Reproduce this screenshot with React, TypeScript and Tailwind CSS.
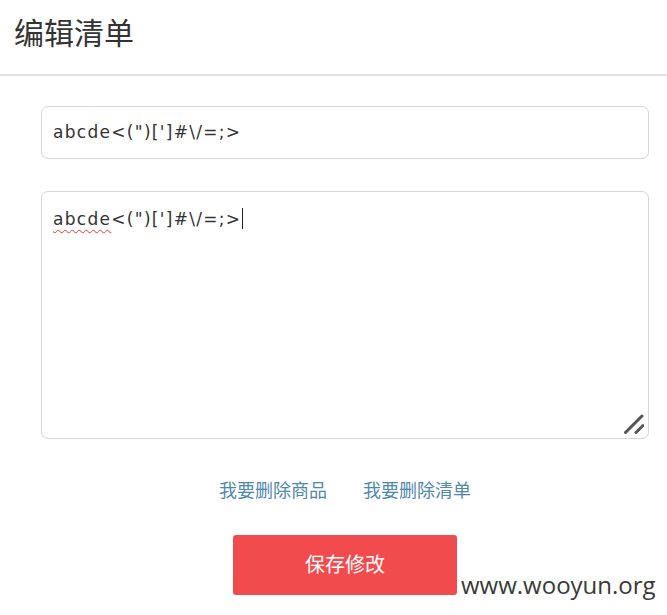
import React from "react";

const cjk = "font-['Noto_Sans','Noto_Sans_CJK_SC',sans-serif]";
const mono = "font-['DejaVu_Sans','Noto_Sans_CJK_SC',sans-serif] tracking-[1.3px]";

const value = "abcde<(\")[']#\\/=;>";

export default function App() {
  return (
    <div className={`relative h-[615px] w-[667px] overflow-hidden bg-white ${cjk}`}>
      <div className="flex h-[76px] items-center border-b-2 border-[#e1e1e1] pl-[14px] pb-[10px]">
        <h1 className="text-[30px] font-normal text-[#333]">编辑清单</h1>
      </div>

      <div className="flex flex-col pl-[41px] pr-[18px] pt-[30px]">
        <div className={`flex h-[53px] items-center rounded-[7px] border border-[#d6d6d6] px-[11px] text-[17px] text-[#333] ${mono}`}>
          {value}
        </div>

        <div className={`relative mt-[32px] h-[248px] rounded-[7px] border border-[#d6d6d6] px-[11px] pt-[12px] text-[17px] text-[#333] ${mono}`}>
          <span className="underline decoration-wavy decoration-[#e53935] decoration-1 underline-offset-[4px]">
            abcde
          </span>
          {value.slice(5)}
          <span className="ml-[1px] inline-block h-[21px] w-[1px] translate-y-[4px] bg-[#222]" />
          <svg
            className="absolute bottom-[4px] right-[4px]"
            width="20"
            height="20"
            viewBox="0 0 20 20"
          >
            <line x1="1.5" y1="18.5" x2="18" y2="2" stroke="#555" strokeWidth="3" strokeLinecap="round" />
            <line x1="12" y1="18.5" x2="19" y2="11.5" stroke="#555" strokeWidth="3" strokeLinecap="round" />
          </svg>
        </div>

        <div className="mt-[38px] flex justify-center gap-[36px] text-[18px] text-[#4f88ac]">
          <a href="#">我要删除商品</a>
          <a href="#">我要删除清单</a>
        </div>

        <div className="mt-[31px] flex pl-[192px]">
          <button className="h-[60px] w-[224px] rounded-[3px] bg-[#f14b4d] text-[20px] text-white">
            保存修改
          </button>
        </div>
      </div>

      <div className="absolute left-[461px] top-[567px] font-['Open_Sans',sans-serif] text-[24px] text-[#3a3a3a]">
        www.wooyun.org
      </div>
    </div>
  );
}
